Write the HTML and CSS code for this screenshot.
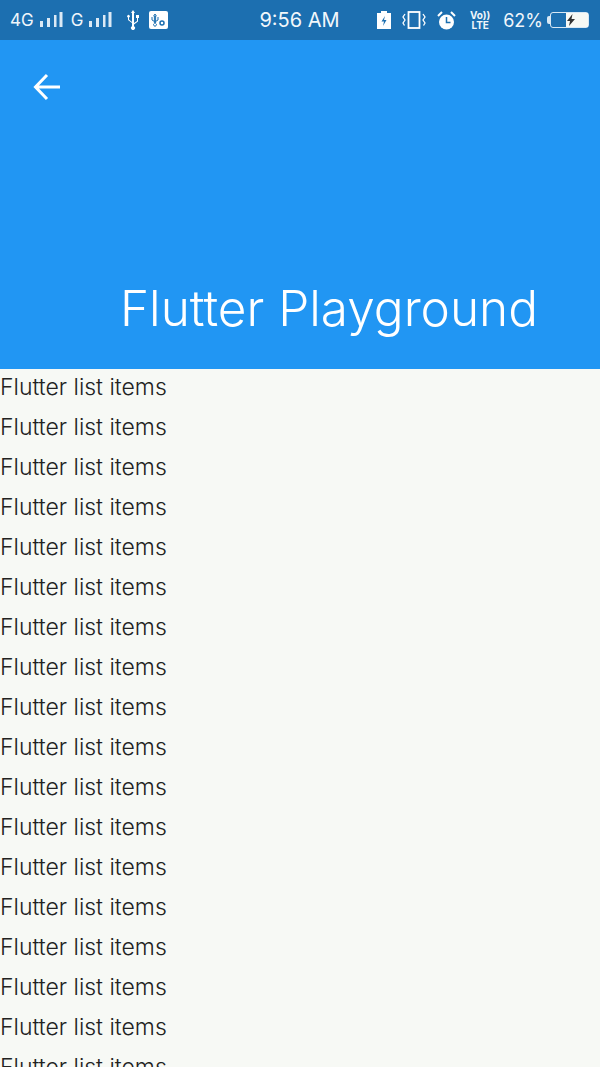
FILE: index.html
```html
<html>
<head>
    <title>Flutter Playground</title>
    <link rel="stylesheet" href="styles.css">
</head>

<body>
<div class="statusbar">
    <div class="status-left">
        <span class="net">4G</span>
        <svg class="signal" width="24" height="16" viewBox="0 0 24 16"><path d="M1 9h3v6H1zM8 6h3v9H8zM15 3h2.500v12H15zM20.500 0h3v15h-3z" fill="#dbe9f5"/></svg>
        <span class="net net-g">G</span>
        <svg class="signal signal-g" width="24" height="16" viewBox="0 0 24 16"><path d="M1 9h3v6H1zM8 6h3v9H8zM15 3h2.500v12H15zM20.500 0h3v15h-3z" fill="#dbe9f5"/></svg>
        <svg class="usb" width="12" height="20" viewBox="0 0 12 20"><path d="M6 0l2 3H7v10l3-2V8H9V5h3v3h-1v3.500l-4 3v1.700a2 2 0 1 1-2 0V13L1 10V7.500a1.300 1.300 0 1 1 1 0V9.500l3 2.500V3H4z" fill="#fff"/></svg>
        <svg class="usb-box" width="19" height="18" viewBox="0 0 19 18"><rect width="19" height="18" rx="2" fill="#fff"/><path d="M6 3l1.300 2H6.600v7.500a1.400 1.400 0 1 1-1.200 0V5h-.7zM3 6v3l2.500 1.500M9 6v3L6.500 10.500" fill="none" stroke="#1c6fb0" stroke-width="1"/><circle cx="13" cy="12" r="2" fill="none" stroke="#1c6fb0" stroke-width="1.500"/></svg>
    </div>
    <div class="clock">9:56 AM</div>
    <div class="status-right">
        <svg width="14" height="18" viewBox="0 0 14 18"><path d="M4 0h6v2h4v16H0V2h4z" fill="#fff"/><path d="M8 5L4.500 10.500H7L6 15l3.500-6H7z" fill="#1c6fb0"/></svg>
        <svg class="vibrate" width="24" height="18" viewBox="0 0 24 18"><rect x="6.500" y="1" width="11" height="16" fill="none" stroke="#fff" stroke-width="1.800"/><path d="M3 3L1 6l2 3-2 3 1.500 2.500M21 3l2 3-2 3 2 3-1.500 2.500" fill="none" stroke="#fff" stroke-width="1.300"/></svg>
        <svg class="alarm" width="19" height="19" viewBox="0 0 19 19"><circle cx="9.500" cy="11" r="7.500" fill="#fff"/><path d="M1 5l4-4M18 5l-4-4" stroke="#fff" stroke-width="2"/><path d="M9.500 6v5.500h4" fill="none" stroke="#1c6fb0" stroke-width="1.500"/></svg>
        <div class="volte"><span>Vo))</span><span>LTE</span></div>
        <span class="percent">62%</span>
        <div class="battery-nub"></div>
        <div class="battery">
            <div class="battery-fill">
                <svg width="10" height="12" viewBox="0 0 10 12"><path d="M6.500 0L1 7h3l-1 5 6-7H5.500z" fill="#333"/></svg>
            </div>
        </div>
    </div>
</div>

<div class="appbar">
    <svg class="back" width="28" height="28" viewBox="0 0 28 28"><path d="M15 2L3.500 14 15 26M3.500 14H28" fill="none" stroke="#fff" stroke-width="3"/></svg>
    <h1 class="title">Flutter Playground</h1>
</div>

<div class="list">
    <div class="item">Flutter list items</div>
    <div class="item">Flutter list items</div>
    <div class="item">Flutter list items</div>
    <div class="item">Flutter list items</div>
    <div class="item">Flutter list items</div>
    <div class="item">Flutter list items</div>
    <div class="item">Flutter list items</div>
    <div class="item">Flutter list items</div>
    <div class="item">Flutter list items</div>
    <div class="item">Flutter list items</div>
    <div class="item">Flutter list items</div>
    <div class="item">Flutter list items</div>
    <div class="item">Flutter list items</div>
    <div class="item">Flutter list items</div>
    <div class="item">Flutter list items</div>
    <div class="item">Flutter list items</div>
    <div class="item">Flutter list items</div>
    <div class="item">Flutter list items</div>
</div>
</body>

</html>
```

FILE: styles.css
```css
html, body {
    height: 100%;
    overflow: hidden;
}

body {
    margin: 0;
    background-color: #f7f9f5;
    color: #222;
    font-family: Inter, Roboto, sans-serif;
}

.statusbar {
    height: 40px;
    background-color: #1c6fb0;
    color: #f0f6fb;
    display: grid;
    grid-template-columns: 1fr auto 1fr;
    align-items: center;
    padding: 0 11px 0 10px;
    box-sizing: border-box;
}

.status-left {
    display: flex;
    align-items: center;
    font-size: 17px;
    font-weight: 400;
}

.net-g {
    margin-left: 8px;
}

.signal {
    margin-left: 5px;
}

.usb {
    margin-left: 15px;
}

.usb-box {
    margin-left: 10px;
}

.clock {
    font-size: 20px;
    color: #f2f7fb;
}

.status-right {
    display: flex;
    align-items: center;
    justify-content: flex-end;
}

.vibrate {
    margin-left: 11px;
}

.alarm {
    margin-left: 11px;
}

.volte {
    display: flex;
    flex-direction: column;
    width: 18px;
    margin-left: 15px;
    font-size: 10px;
    font-weight: 700;
    line-height: 10px;
    text-align: center;
    white-space: nowrap;
    align-items: center;
}

.percent {
    font-size: 18px;
    margin-left: 14px;
}

.battery-nub {
    width: 3px;
    height: 8px;
    margin-left: 4px;
    background-color: #d8e8f5;
    border-radius: 2px 0 0 2px;
}

.battery {
    width: 39px;
    height: 16px;
    border: 1.500px solid #d8e8f5;
    border-radius: 3px;
    display: flex;
    justify-content: flex-end;
    box-sizing: border-box;
}

.battery-fill {
    width: 22px;
    background-color: #f7f9f5;
    display: flex;
    align-items: center;
}

.appbar {
    height: 329px;
    background-color: #2196f3;
    display: flex;
    flex-direction: column;
    justify-content: space-between;
    box-sizing: border-box;
    padding: 33px 0 33px 32px;
}

.back {
    display: block;
}

.title {
    margin: 0 0 0 88px;
    font-size: 49.500px;
    font-weight: 300;
    line-height: 56px;
    color: #fff;
    white-space: nowrap;
}

.item {
    height: 40px;
    font-size: 23px;
    font-weight: 300;
    line-height: 36px;
}
```
